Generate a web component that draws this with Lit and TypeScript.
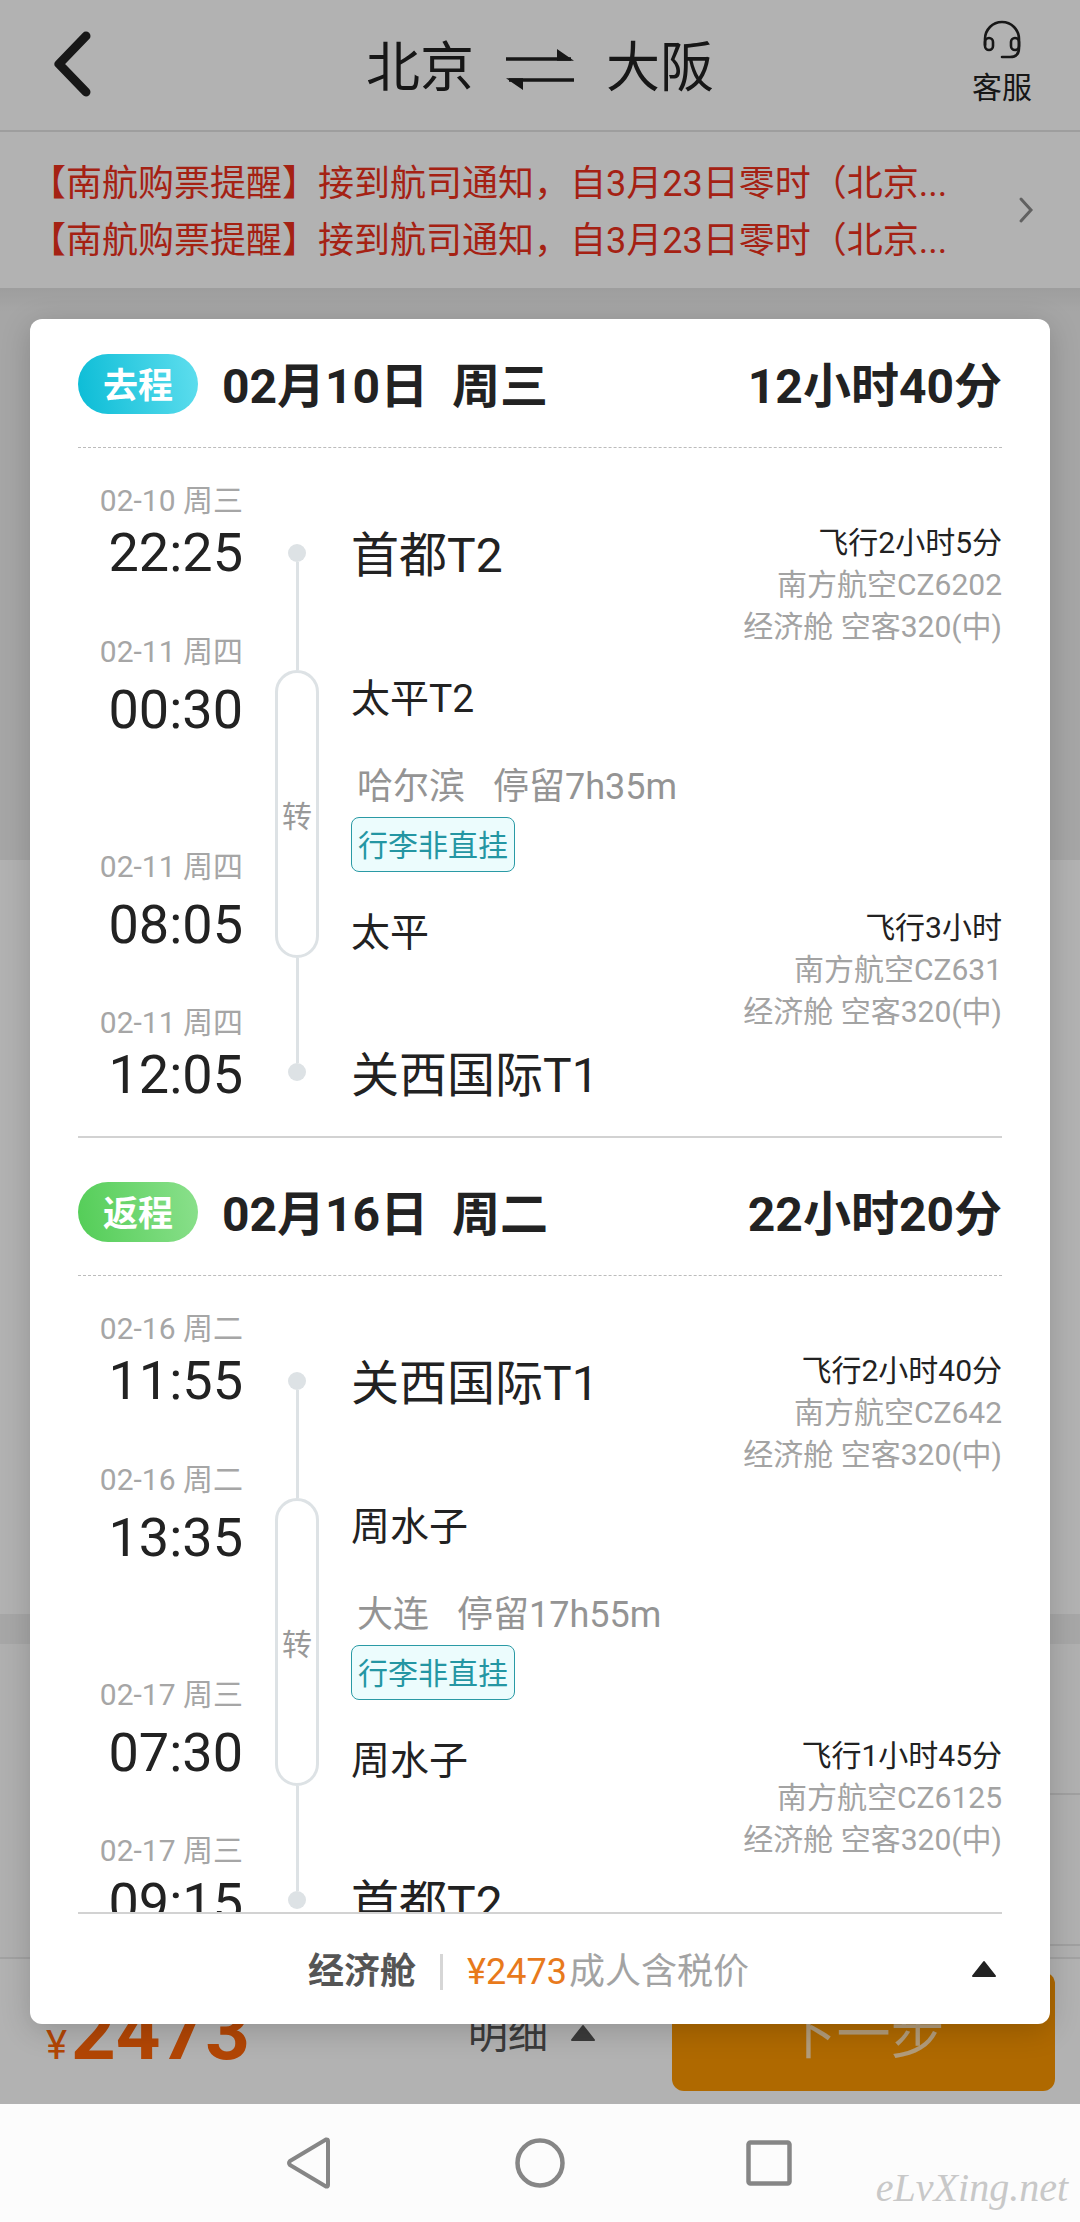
import { LitElement, html, css, svg } from "lit";
import { customElement, property } from "lit/decorators.js";

interface Stop {
  date: string;
  time: string;
  place: string;
}

interface Leg {
  duration: string;
  flight: string;
  cabin: string;
}

interface Trip {
  kind: "out" | "back";
  label: string;
  date: string;
  total: string;
  stops: Stop[];
  legs: Leg[];
  layoverCity: string;
  layoverTime: string;
  baggage: string;
}

const TRIPS: Trip[] = [
  {
    kind: "out",
    label: "去程",
    date: "02月10日  周三",
    total: "12小时40分",
    stops: [
      { date: "02-10 周三", time: "22:25", place: "首都T2" },
      { date: "02-11 周四", time: "00:30", place: "太平T2" },
      { date: "02-11 周四", time: "08:05", place: "太平" },
      { date: "02-11 周四", time: "12:05", place: "关西国际T1" },
    ],
    legs: [
      { duration: "飞行2小时5分", flight: "南方航空CZ6202", cabin: "经济舱 空客320(中)" },
      { duration: "飞行3小时", flight: "南方航空CZ631", cabin: "经济舱 空客320(中)" },
    ],
    layoverCity: "哈尔滨",
    layoverTime: "停留7h35m",
    baggage: "行李非直挂",
  },
  {
    kind: "back",
    label: "返程",
    date: "02月16日  周二",
    total: "22小时20分",
    stops: [
      { date: "02-16 周二", time: "11:55", place: "关西国际T1" },
      { date: "02-16 周二", time: "13:35", place: "周水子" },
      { date: "02-17 周三", time: "07:30", place: "周水子" },
      { date: "02-17 周三", time: "09:15", place: "首都T2" },
    ],
    legs: [
      { duration: "飞行2小时40分", flight: "南方航空CZ642", cabin: "经济舱 空客320(中)" },
      { duration: "飞行1小时45分", flight: "南方航空CZ6125", cabin: "经济舱 空客320(中)" },
    ],
    layoverCity: "大连",
    layoverTime: "停留17h55m",
    baggage: "行李非直挂",
  },
];

const NOTICES = [
  "【南航购票提醒】接到航司通知，自3月23日零时（北京...",
  "【南航购票提醒】接到航司通知，自3月23日零时（北京...",
];

const upTriangle = html`<svg class="tri" width="26" height="18" viewBox="0 0 26 18" aria-hidden="true">
  ${svg`<path d="M13 2 L24 16 H2 Z" fill="currentColor" stroke="currentColor" stroke-width="2" stroke-linejoin="round"/>`}
</svg>`;

@customElement("trip-section")
export class TripSection extends LitElement {
  @property({ attribute: false }) trip!: Trip;

  static styles = css`
    :host {
      display: block;
      border-bottom: 2px solid #d2d2d2;
    }
    .head {
      display: flex;
      align-items: center;
      padding: 44px 0 33px;
      border-bottom: 1px dashed #bcbcbc;
    }
    :host(:first-child) .head {
      padding-top: 35px;
    }
    .pill {
      width: 120px;
      height: 60px;
      border-radius: 30px;
      display: flex;
      align-items: center;
      justify-content: center;
      box-sizing: border-box;
      padding-top: 6px;
      color: #fff;
      font-size: 35px;
      font-weight: 700;
      line-height: 42px;
    }
    .out {
      background: linear-gradient(80deg, #0bbcd6, #5fdeee);
    }
    .back {
      background: linear-gradient(80deg, #53cd57, #8be08c);
    }
    .day,
    .total {
      margin: 0;
      padding-top: 4px;
      font-size: 48px;
      font-weight: 700;
      line-height: 60px;
      white-space: pre;
    }
    .day {
      flex: 1;
      padding-left: 24px;
    }
    .head .day,
    .head .total {
      padding-top: 6px;
      line-height: 54px;
    }
    .body {
      display: grid;
      grid-template-columns: 165px 44px 1fr auto;
      column-gap: 32px;
      padding: 32px 0 30px;
    }
    .times {
      display: flex;
      flex-direction: column;
      justify-content: space-between;
      text-align: right;
    }
    .stay {
      display: flex;
      flex-direction: column;
      gap: 105px;
    }
    .stop {
      display: flex;
      flex-direction: column;
    }
    .stay .stop {
      gap: 6px;
    }
    .date {
      color: #a6a6a6;
      font-size: 30px;
      line-height: 42px;
    }
    .time {
      font-size: 54px;
      line-height: 62px;
    }
    .rail {
      display: flex;
      flex-direction: column;
      align-items: center;
      padding: 64px 0 25px;
    }
    .dot {
      width: 18px;
      height: 18px;
      border-radius: 50%;
      background: #dde2e5;
    }
    .line {
      width: 3px;
      flex: 1;
      background: #dde2e5;
    }
    .dot + .line {
      flex: none;
      height: 108px;
    }
    .transfer {
      width: 44px;
      height: 288px;
      box-sizing: border-box;
      border: 3px solid #dde2e5;
      border-radius: 22px;
      display: flex;
      align-items: center;
      justify-content: center;
      padding-top: 6px;
      color: #999;
      font-size: 30px;
      line-height: 42px;
    }
    .places {
      padding-top: 46px;
    }
    .port {
      font-size: 48px;
      line-height: 60px;
    }
    .via {
      font-size: 39px;
      line-height: 50px;
    }
    .port + .via,
    .via + .port {
      margin-top: 88px;
    }
    .tag + .via {
      margin-top: 36px;
    }
    .layover {
      display: flex;
      gap: 28px;
      margin: 38px 0 5px;
      padding-left: 6px;
      color: #949494;
      font-size: 36px;
      line-height: 50px;
    }
    .tag {
      width: fit-content;
      padding: 7px 6px 5px;
      border: 1px solid #2a9aa5;
      border-radius: 8px;
      background: #ecfcfd;
      color: #2496a3;
      font-size: 30px;
      line-height: 41px;
    }
    .legs {
      display: flex;
      flex-direction: column;
      gap: 259px;
      padding-top: 42px;
      text-align: right;
      color: #a3a3a3;
      font-size: 30px;
      line-height: 42px;
    }
    .flown {
      color: #222;
    }
  `;

  private stop(s: Stop) {
    return html`<div class="stop">
      <span class="date">${s.date}</span>
      <span class="time">${s.time}</span>
    </div>`;
  }

  render() {
    const t = this.trip;
    const [a, b, c, d] = t.stops;
    return html`
      <header class="head">
        <span class="pill ${t.kind}">${t.label}</span>
        <h2 class="day">${t.date}</h2>
        <p class="total">${t.total}</p>
      </header>
      <div class="body">
        <div class="times">
          ${this.stop(a)}
          <div class="stay">${this.stop(b)}${this.stop(c)}</div>
          ${this.stop(d)}
        </div>
        <div class="rail">
          <span class="dot"></span>
          <span class="line"></span>
          <span class="transfer">转</span>
          <span class="line"></span>
          <span class="dot"></span>
        </div>
        <div class="places">
          <div class="port">${a.place}</div>
          <div class="via">${b.place}</div>
          <div class="layover"><span>${t.layoverCity}</span><span>${t.layoverTime}</span></div>
          <div class="tag">${t.baggage}</div>
          <div class="via">${c.place}</div>
          <div class="port">${d.place}</div>
        </div>
        <div class="legs">
          ${t.legs.map(
            (l) => html`<div>
              <div class="flown">${l.duration}</div>
              <div>${l.flight}</div>
              <div>${l.cabin}</div>
            </div>`,
          )}
        </div>
      </div>
    `;
  }
}

@customElement("app-root")
export class AppRoot extends LitElement {
  static styles = css`
    :host {
      display: flex;
      flex-direction: column;
      height: 100vh;
      overflow: hidden;
      color: #222;
      font-family: Roboto, "Noto Sans CJK SC", sans-serif;
    }
    button {
      border: 0;
      padding: 0;
      background: none;
      color: inherit;
      font: inherit;
    }
    svg {
      display: block;
    }
    .app {
      flex: 1;
      min-height: 0;
      position: relative;
      display: flex;
      flex-direction: column;
      background: #fff;
    }
    .top {
      display: grid;
      grid-template-columns: 1fr auto 1fr;
      align-items: center;
      height: 132px;
      padding: 0 48px;
      border-bottom: 2px solid #e2e2e2;
      box-sizing: border-box;
      flex: none;
    }
    .backward {
      justify-self: start;
      padding-bottom: 2px;
    }
    .route {
      display: flex;
      align-items: center;
      gap: 31px;
      margin: 0;
      padding-top: 8px;
      font-size: 54px;
      font-weight: 400;
      line-height: 64px;
    }
    .service {
      justify-self: end;
      display: flex;
      flex-direction: column;
      align-items: center;
      gap: 8px;
      padding-bottom: 2px;
      font-size: 30px;
      line-height: 40px;
    }
    .notice {
      display: flex;
      align-items: center;
      justify-content: space-between;
      height: 156px;
      padding: 0 44px 0 30px;
      box-sizing: border-box;
      color: #ec301c;
      font-size: 36px;
      line-height: 57px;
      text-decoration: none;
      flex: none;
    }
    .lines {
      padding-top: 6px;
    }
    .more {
      color: #8c8c8c;
    }
    .hero {
      flex: none;
      height: 572px;
      background: linear-gradient(#e2e2e2, #eee 24px);
    }
    .panel {
      flex: none;
      height: 754px;
    }
    .gap {
      flex: none;
      height: 30px;
      background: #f0f0f0;
    }
    .rows {
      flex: 1;
      display: flex;
      flex-direction: column;
      padding-left: 48px;
      background: #fdfdfd;
    }
    .row {
      height: 149px;
      border-bottom: 2px solid #e6e6e6;
    }
    .bar {
      display: flex;
      align-items: center;
      justify-content: space-between;
      height: 147px;
      padding: 0 25px 0 46px;
      box-sizing: border-box;
      border-top: 2px solid #e8e8e8;
      flex: none;
    }
    .price {
      flex: 1;
      display: flex;
      align-items: baseline;
      gap: 4px;
      padding-top: 16px;
      color: #ff6508;
      font-size: 40px;
      line-height: 80px;
    }
    .amount {
      font-size: 78px;
      font-weight: 700;
    }
    .detail {
      display: flex;
      align-items: center;
      gap: 22px;
      padding: 6px 76px 0 0;
      color: #555;
      font-size: 40px;
      line-height: 50px;
    }
    .detail .tri {
      margin-bottom: 4px;
    }
    .next {
      width: 383px;
      height: 119px;
      padding-top: 8px;
      border-radius: 12px;
      background: #fb9700;
      color: #ffe0b0;
      font-size: 54px;
      line-height: 60px;
    }
    .scrim {
      position: absolute;
      inset: 0;
      display: flex;
      padding: 319px 30px 80px;
      background: rgba(0, 0, 0, 0.3);
    }
    .sheet {
      flex: 1;
      min-width: 0;
      display: flex;
      flex-direction: column;
      padding: 0 48px;
      border-radius: 12px;
      background: #fff;
      box-shadow: 0 6px 30px rgba(0, 0, 0, 0.18);
    }
    .list {
      flex: 1;
      min-height: 0;
      overflow-y: auto;
      scrollbar-width: none;
    }
    .sum {
      display: flex;
      align-items: center;
      height: 112px;
      box-sizing: border-box;
      border-top: 2px solid #d2d2d2;
      font-size: 36px;
      line-height: 44px;
    }
    .fare {
      flex: 1;
      display: flex;
      align-items: center;
      justify-content: center;
      padding: 6px 0 0 8px;
    }
    .cabin {
      padding-right: 24px;
      border-right: 3px solid #d6d6d6;
      color: #555;
      font-weight: 700;
      line-height: 36px;
    }
    .cost {
      padding-left: 24px;
      color: #e87a1c;
    }
    .note {
      padding-left: 2px;
      color: #a3a3a3;
    }
    .fold {
      padding-right: 5px;
    }
    .nav {
      display: flex;
      align-items: center;
      justify-content: center;
      gap: 180px;
      height: 118px;
      flex: none;
      position: relative;
      background: #fcfcfc;
    }
    .mark {
      position: absolute;
      right: 12px;
      bottom: 10px;
      color: #c8c8c8;
      font-family: "Liberation Serif", serif;
      font-size: 40px;
      font-style: italic;
      line-height: 48px;
    }
  `;

  render() {
    return html`
      <div class="app">
        <header class="top">
          <button class="backward" aria-label="返回">
            <svg width="50" height="72" viewBox="0 0 50 72">
              <path d="M38 8 L11 36 L38 64" fill="none" stroke="#222" stroke-width="9" stroke-linecap="round" stroke-linejoin="round" />
            </svg>
          </button>
          <h1 class="route">
            <span>北京</span>
            <svg width="70" height="44" viewBox="0 0 70 44" aria-hidden="true">
              <path d="M1 12 H66 M4 33 H69" stroke="#222" stroke-width="3.500" fill="none" />
              <path d="M52 2 L69 13.700 H52 Z M18 43 L1 31.300 H18 Z" fill="#222" />
            </svg>
            <span>大阪</span>
          </h1>
          <button class="service">
            <svg width="40" height="40" viewBox="0 0 40 40" aria-hidden="true" fill="none" stroke="#222" stroke-width="2.600" stroke-linecap="round">
              <path d="M3 25 V19 A17 17 0 0 1 37 19 V28 Q37 37 28 37 H20" />
              <rect x="3" y="18" width="8" height="12" rx="4" />
              <rect x="29" y="18" width="8" height="12" rx="4" />
            </svg>
            <span>客服</span>
          </button>
        </header>
        <a class="notice" href="#notice">
          <span class="lines">${NOTICES.map((n) => html`<div>${n}</div>`)}</span>
          <svg class="more" width="20" height="30" viewBox="0 0 20 30" aria-hidden="true">
            <path d="M5 4 L15 15 L5 26" fill="none" stroke="currentColor" stroke-width="3" stroke-linecap="round" />
          </svg>
        </a>
        <div class="hero"></div>
        <div class="panel"></div>
        <div class="gap"></div>
        <div class="rows">
          <div class="row"></div>
          <div class="row"></div>
        </div>
        <footer class="bar">
          <span class="price"><span>¥</span><span class="amount">2473</span></span>
          <button class="detail">明细 ${upTriangle}</button>
          <button class="next">下一步</button>
        </footer>
        <div class="scrim">
          <section class="sheet" role="dialog" aria-modal="true">
            <div class="list">
              ${TRIPS.map((t) => html`<trip-section .trip=${t}></trip-section>`)}
            </div>
            <footer class="sum">
              <div class="fare">
                <span class="cabin">经济舱</span>
                <span class="cost">¥2473</span>
                <span class="note">成人含税价</span>
              </div>
              <button class="fold" aria-label="收起">${upTriangle}</button>
            </footer>
          </section>
        </div>
      </div>
      <nav class="nav">
        <button aria-label="后退">
          <svg width="50" height="56" viewBox="0 0 50 56" fill="none" stroke="#868686" stroke-width="4" stroke-linejoin="round">
            <path d="M43 6 V50 Q43 52 41 51.500 L5 30 Q3 28 5 26 L41 4.500 Q43 4 43 6 Z" />
          </svg>
        </button>
        <button aria-label="主页">
          <svg width="50" height="50" viewBox="0 0 50 50" fill="none" stroke="#868686" stroke-width="4.500">
            <circle cx="25" cy="25" r="22.500" />
          </svg>
        </button>
        <button aria-label="最近任务">
          <svg width="50" height="50" viewBox="0 0 50 50" fill="none" stroke="#868686" stroke-width="4.500">
            <rect x="3.500" y="4.500" width="41" height="41" rx="2" />
          </svg>
        </button>
        <span class="mark">eLvXing.net</span>
      </nav>
    `;
  }
}
